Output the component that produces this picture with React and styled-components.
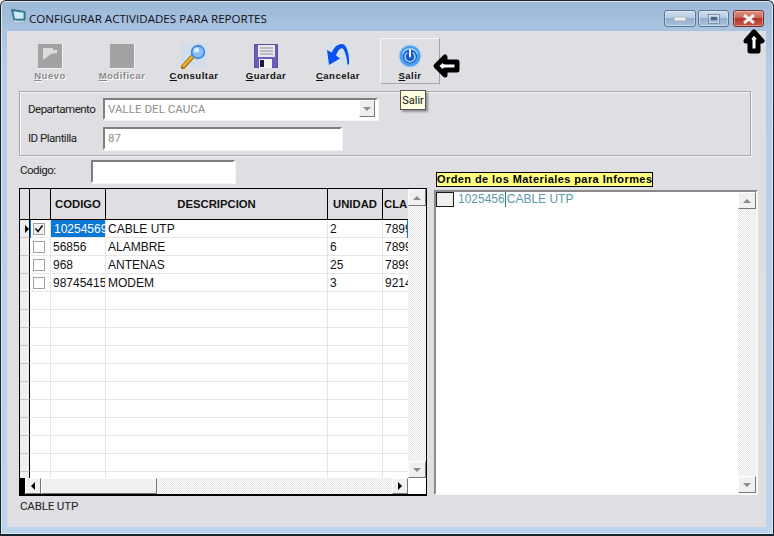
import React from "react";
import styled, { createGlobalStyle } from "styled-components";

const Global = createGlobalStyle`
  html, body { margin: 0; padding: 0; background: #fff; }
  #root { width: 774px; height: 536px; overflow: hidden; }
  * { box-sizing: border-box; }
`;

const sans = `"Liberation Sans", Arial, sans-serif`;
const ui = `Roboto, "Liberation Sans", sans-serif`;

const Win = styled.div`
  position: relative;
  width: 774px; height: 536px;
  display: flex; flex-direction: column;
  border: 1px solid #222;
  border-bottom: 2px solid #16222c;
  border-radius: 6px 6px 0 0;
  background: linear-gradient(180deg, #9db9d8 0, #b5cde8 60px, #bcd4ee 100%);
  padding: 0 7px 7px 6px;
  font-family: ${sans};
  box-shadow: inset 0 0 0 1px #dbe9f6;
  overflow: hidden;
`;
const TitleBar = styled.div`
  height: 30px; flex: none;
  display: flex; align-items: center;
  padding: 0 1px 0 3px;
`;
const TitleText = styled.span`
  margin: 5px 0 0 1px; flex: 1;
  font: 11.6px "Open Sans", sans-serif;
  color: #101018;
`;
const Caps = styled.div`display: flex; align-self: flex-start; margin-top: 9px; margin-right: 1px;`;
const Cap = styled.div`
  width: ${p => p.$w}px; height: 17px;
  margin-left: ${p => p.$gap}px;
  display: flex; align-items: center; justify-content: center;
  border: 1px solid ${p => p.$close ? "#7a2c2a" : "#5d7690"};
  border-radius: 3px;
  background: ${p => p.$close
    ? "linear-gradient(180deg,#dd8f80 0,#c9685a 45%,#b2382c 50%,#c65648 100%)"
    : "linear-gradient(180deg,#cfdeee 0,#b7cce2 45%,#94b0cd 50%,#a9c2dc 100%)"};
  box-shadow: inset 0 0 0 1px rgba(255,255,255,.35);
`;
const Client = styled.div`
  flex: 1; min-height: 0;
  background: #dfdfe3;
  display: flex; flex-direction: column;
  padding: 7px 8px 0 12px;
`;
const Toolbar = styled.div`display: flex; gap: 12px; padding-left: 1px; height: 46px; flex: none;`;
const ToolBtn = styled.div`
  width: 60px; height: 46px; flex: none;
  display: flex; flex-direction: column; align-items: center;
  padding-top: 4px;
  border: 1px solid ${p => p.$hot ? "#a8a8a8" : "transparent"};
  border-top-color: ${p => p.$hot ? "#f6f6f6" : "transparent"};
  border-left-color: ${p => p.$hot ? "#f6f6f6" : "transparent"};
  border-right-color: ${p => p.$hot ? "#a0a0a0" : "transparent"};
`;
const IconBox = styled.div`width: 26px; height: 26px; display: flex; align-items: center; justify-content: center;`;
const ToolLabel = styled.span`
  margin-top: 1px;
  font: bold 9.5px ${sans};
  letter-spacing: 0.5px;
  line-height: 11px;
  white-space: nowrap;
  color: ${p => p.$off ? "#8a8a8a" : "#111"};
  text-shadow: ${p => p.$off ? "1px 1px 0 #fff" : "none"};
  u { text-underline-offset: 1px; }
`;
const Group = styled.div`
  flex: none; width: 732px; height: 65px;
  margin-top: 7px;
  border: 1px solid #a8a8a8;
  box-shadow: inset 1px 1px 0 #f4f4f4, 1px 1px 0 #f4f4f4;
  display: flex; flex-direction: column; gap: 7px;
  padding: 6px 0 0 8px;
`;
const FormRow = styled.div`display: flex; align-items: center; height: 22px;`;
const Label = styled.span`
  width: ${p => p.$w}px; flex: none;
  font: 11.6px ${ui}; letter-spacing: -0.55px; color: #222;
`;
const Sunken = styled.div`
  width: ${p => p.$w}px; height: ${p => p.$h}px;
  border: 2px solid; border-color: #7f7f7f #fff #fff #7f7f7f;
  background: #fff;
  display: flex; align-items: center;
  padding-left: 3px;
  font: 11.6px ${ui}; color: #8f8f8f;
  position: relative;
  box-shadow: 1px 1px 0 #f4f4f4;
`;
const ComboArrow = styled.div`
  position: absolute; right: 1px; top: 0; bottom: 1px; width: 16px;
  background: #efefef;
  border: 1px solid; border-color: #fff #7a7a7a #7a7a7a #fff;
  display: flex; align-items: center; justify-content: center;
`;
const CodigoRow = styled.div`display: flex; align-items: center; margin-top: 4px; height: 23px; flex: none;`;
const CodigoLabel = styled.span`width: 72px; font: 11.6px ${ui}; letter-spacing: -0.55px; color: #222; padding: 0 0 3px 1px;`;
const Panels = styled.div`display: flex; margin-top: 5px; flex: none; align-items: flex-start;`;

const GridBox = styled.div`
  width: 408px; height: 308px; flex: none;
  border: 1px solid #000; border-bottom-width: 2px; border-right-width: 1px;
  background: #fff;
  display: flex; flex-direction: column;
  overflow: hidden;
`;
const GridBody = styled.div`flex: 1; min-height: 0; display: flex;`;
const GridTable = styled.div`flex: 1; min-width: 0; overflow: hidden; display: flex; flex-direction: column;`;
const gridCols = "10px 21px 55px 222px 55px 26px";
const HeadRow = styled.div`
  display: grid; grid-template-columns: ${gridCols};
  height: 31px; flex: none;
  border-bottom: 1px solid #000;
`;
const Head = styled.div`
  background: #dfdfe3;
  border-right: 1px solid #000;
  display: flex; align-items: center; justify-content: ${p => p.$left ? "flex-start" : "center"};
  padding-left: ${p => p.$left ? 1 : 0}px;
  font: bold 11.3px ${sans}; color: #111;
  white-space: nowrap; overflow: hidden;
  &:last-child { border-right: 0; }
`;
const Row = styled.div`
  display: grid; grid-template-columns: ${gridCols};
  height: 18px; flex: none; position: relative;
`;
const Indicator = styled.div`
  background: #efefef;
  border-right: 1px solid #000;
  border-bottom: 1px solid #c8c8c8;
  display: flex; align-items: center; justify-content: flex-end;
`;
const Cell = styled.div`
  border-right: 1px solid #e6e6e6; border-bottom: 1px solid #e6e6e6;
  display: flex; align-items: center;
  padding-left: ${p => p.$sel ? 3 : 2}px;
  font: 12px ${sans}; color: #111;
  white-space: nowrap; overflow: hidden;
  background: ${p => p.$sel ? "#0a78d4" : "#fff"};
  ${p => p.$sel ? "color:#fff;" : ""}
  ${p => p.$center ? "justify-content:center; padding-left:0; padding-right:2px;" : ""}
`;
const SelFrame = styled.div`
  position: absolute; left: 10px; right: 0; top: 0; bottom: -1px;
  border: 1px solid #0a78d4; border-top: 0;
  pointer-events: none;
`;
const Check = styled.div`
  width: 12px; height: 12px;
  border: 1px solid #a0a0a0;
  background: ${p => p.$on ? "#f0f0f0" : "#fff"};
  display: flex; align-items: center; justify-content: center;
`;
const VBar = styled.div`
  width: 18px; flex: none;
  display: flex; flex-direction: column; justify-content: space-between;
  background-image: repeating-conic-gradient(#e6e6e6 0 25%, #fbfbfb 0 50%);
  background-size: 2px 2px;
`;
const HBar = styled.div`
  height: 16px; flex: none; display: flex;
  background: #fff;
`;
const HTrack = styled.div`
  flex: 1; display: flex; justify-content: space-between;
  background-image: repeating-conic-gradient(#e6e6e6 0 25%, #fbfbfb 0 50%);
  background-size: 2px 2px;
`;
const ScrollBtn = styled.div`
  width: ${p => p.$w || 17}px; height: ${p => p.$h || 17}px; flex: none;
  background: #f0f0f0;
  border: 1px solid; border-color: #fff #777 #777 #fff;
  display: flex; align-items: center; justify-content: center;
`;
const Thumb = styled.div`
  width: 116px; height: 16px; flex: none;
  background: #f0f0f0;
  border: 1px solid; border-color: #fff #777 #777 #fff;
`;
const Corner = styled.div`width: 18px; flex: none; background: #fff;`;
const BlackTab = styled.div`width: 5px; flex: none; background: #000;`;

const Right = styled.div`margin-left: 7px; width: 324px; display: flex; flex-direction: column; margin-top: -16px;`;
const Yellow = styled.div`
  margin-left: 2px; width: 217px; height: 15px; flex: none;
  background: #ffff80;
  border: 1px solid #000;
  font: bold 11px ${sans};
  letter-spacing: 0.42px;
  color: #000;
  line-height: 13px;
  white-space: nowrap; overflow: hidden;
`;
const ListBox = styled.div`
  margin-top: 3px;
  width: 324px; height: 305px;
  border: 2px solid; border-color: #8a8a8a #f8f8f8 #f8f8f8 #8a8a8a;
  background: #fff;
  display: flex;
`;
const ListContent = styled.div`flex: 1; display: flex; align-items: flex-start;`;
const ListCheck = styled.div`
  width: 18px; height: 15px; flex: none;
  background: #efefef;
  border: 1px solid #1a1a1a;
`;
const ListText = styled.div`
  margin-left: 4px;
  font: 12px ${sans};
  color: #5a9aa8;
  line-height: 15px;
  display: flex;
`;
const Caret = styled.span`border-right: 1px solid #2a7a80; margin-right: 1px;`;
const Status = styled.div`
  margin-top: 3px; font: 11.6px ${ui}; letter-spacing: -0.2px; color: #222; padding-left: 1px;
`;
const Tooltip = styled.div`
  position: absolute; left: 399px; top: 89px;
  height: 20px; width: 26px;
  background: #ffffe1;
  border: 1px solid #555;
  box-shadow: 2px 2px 2px rgba(0,0,0,.35);
  font: 11px ${ui};
  color: #111;
  display: flex; align-items: center; justify-content: center;
`;
const Overlay = styled.svg`position: absolute; left: ${p => p.$x}px; top: ${p => p.$y}px;`;

const Tri = ({ dir, color = "#8c8c8c", size = 4 }) => {
  const s = size;
  const pts = {
    up: `0,${s} ${s},0 ${s * 2},${s}`,
    down: `0,0 ${s * 2},0 ${s},${s}`,
    left: `${s},0 ${s},${s * 2} 0,${s}`,
    right: `0,0 0,${s * 2} ${s},${s}`,
  }[dir];
  const v = dir === "up" || dir === "down";
  return <svg width={v ? s * 2 : s} height={v ? s : s * 2}><polygon points={pts} fill={color} /></svg>;
};

const IconNuevo = () => (
  <svg width="25" height="25" viewBox="0 0 25 25">
    <rect width="25" height="25" fill="#a2a2a2" />
    <path d="M5 4H15V6H19V9L13 10L5 16Z" fill="#dcdcdc" />
    <path d="M24.5 0v24.5H0" fill="none" stroke="#f4f4f4" />
  </svg>
);
const IconMod = () => (
  <svg width="25" height="25" viewBox="0 0 25 25">
    <rect width="25" height="25" fill="#a2a2a2" />
    <path d="M24.5 0v24.5H0" fill="none" stroke="#f4f4f4" />
  </svg>
);
const IconSearch = () => (
  <svg width="26" height="26" viewBox="0 0 26 26">
    <rect width="26" height="24" fill="#d3dfe8" />
    <path d="M2 24 L12 13" stroke="#a86a10" strokeWidth="4.5" strokeLinecap="round" />
    <path d="M2.5 23 L12 13" stroke="#f4b42a" strokeWidth="2.5" strokeLinecap="round" />
    <circle cx="17" cy="9" r="7.2" fill="#3c86e6" />
    <circle cx="17" cy="9" r="5.6" fill="#86bdf6" />
    <circle cx="15.5" cy="7" r="2.6" fill="#d6ecff" />
  </svg>
);
const IconSave = () => (
  <svg width="24" height="24" viewBox="0 0 24 24">
    <rect width="24" height="24" fill="#5a4ea6" />
    <rect x="1" y="1" width="22" height="22" fill="#6a5eb8" />
    <rect x="4" y="1" width="17" height="12" fill="#e8e8ec" />
    <path d="M6 4h13M6 7h13M6 10h13" stroke="#8d8da0" strokeWidth="1" />
    <rect x="5" y="15" width="13" height="9" fill="#f2f2f2" />
    <rect x="6" y="16" width="4" height="7" fill="#1c1c40" />
  </svg>
);
const IconUndo = () => (
  <svg width="26" height="26" viewBox="0 0 26 26">
    <rect width="25" height="24" fill="#d6e2ea" />
    <path d="M2 7 L4 22 L15 15.5 L11 12.5 C13 7 15.5 4.5 17.5 5.5 C20 7 22 15 22.5 22 L24 21 C24.5 12 22 1 17 1 C12 1 8.5 5 7 9.5 Z" fill="#0a50ee" />
  </svg>
);
const IconPower = () => (
  <svg width="24" height="24" viewBox="0 0 24 24">
    <circle cx="12" cy="12" r="11.5" fill="#b7d6ee" />
    <circle cx="12" cy="12" r="10.5" fill="#4aa0ee" />
    <path d="M4 10 A8.5 8.5 0 0 1 20 10 A16 6 0 0 0 4 10z" fill="#a8d4f8" />
    <circle cx="12" cy="12.5" r="7" fill="#1a58d0" />
    <path d="M8.8 9 A5 5 0 1 0 15.2 9" fill="none" stroke="#9ccdf8" strokeWidth="1.6" strokeLinecap="round" />
    <path d="M12 6v6.5" stroke="#eef7ff" strokeWidth="2" strokeLinecap="round" />
  </svg>
);
const IconApp = () => (
  <svg width="18" height="18" viewBox="0 0 18 18">
    <path d="M1.5 2.5 L15 4.5 L15 13 L4 13 Z" fill="#3f8a9c" stroke="#2f6f85" />
    <path d="M3.5 4.5 L13.5 5.8 L13.5 11.5 L5 11.8 Z" fill="#cfe9f4" />
    <path d="M3 13 L5 16 L14 15.5 L15 14 L7 14 Z" fill="#e8f0f4" stroke="#7c9aaa" strokeWidth=".6" />
  </svg>
);

const tools = [
  { u: "N", rest: "uevo", icon: <IconNuevo />, off: true },
  { u: "M", rest: "odificar", icon: <IconMod />, off: true },
  { u: "C", rest: "onsultar", icon: <IconSearch /> },
  { u: "G", rest: "uardar", icon: <IconSave /> },
  { u: "C", rest: "ancelar", icon: <IconUndo /> },
  { u: "S", rest: "alir", icon: <IconPower />, hot: true },
];
const rows = [
  ["10254569", "CABLE UTP", "2", "7899"],
  ["56856", "ALAMBRE", "6", "7899"],
  ["968", "ANTENAS", "25", "7899"],
  ["98745415", "MODEM", "3", "9214"],
  ...Array.from({ length: 11 }, () => ["", "", "", ""]),
];

export default function App() {
  return (
    <Win>
      <Global />
      <TitleBar>
        <IconApp />
        <TitleText>CONFIGURAR ACTIVIDADES PARA REPORTES</TitleText>
        <Caps>
          <Cap $w={32} $gap={0}><svg width="12" height="4"><rect width="12" height="4" rx="1" fill="#f2f2f2" stroke="#5c6f86" strokeWidth=".6" /></svg></Cap>
          <Cap $w={31} $gap={2}><svg width="12" height="10"><rect x="1" y="1" width="10" height="8" fill="none" stroke="#f2f2f2" strokeWidth="1" /><rect x="0.5" y="0.5" width="11" height="9" fill="none" stroke="#5c6f86" strokeWidth=".7" /><rect x="3" y="3" width="6" height="3" fill="#4f6482" /></svg></Cap>
          <Cap $w={31} $gap={4} $close><svg width="14" height="10" viewBox="0 0 14 10"><path d="M2 1 L12 9 M12 1 L2 9" stroke="#f4efef" strokeWidth="3" /></svg></Cap>
        </Caps>
      </TitleBar>
      <Client>
        <Toolbar>
          {tools.map(t => (
            <ToolBtn key={t.u + t.rest} $hot={t.hot}>
              <IconBox>{t.icon}</IconBox>
              <ToolLabel $off={t.off}><u>{t.u}</u>{t.rest}</ToolLabel>
            </ToolBtn>
          ))}
        </Toolbar>
        <Group>
          <FormRow>
            <Label $w={75}>Departamento</Label>
            <Sunken $w={275} $h={22}>VALLE DEL CAUCA<ComboArrow><Tri dir="down" /></ComboArrow></Sunken>
          </FormRow>
          <FormRow>
            <Label $w={75}>ID Plantilla</Label>
            <Sunken $w={239} $h={23}>87</Sunken>
          </FormRow>
        </Group>
        <CodigoRow>
          <CodigoLabel>Codigo:</CodigoLabel>
          <Sunken $w={144} $h={23} />
        </CodigoRow>
        <Panels>
          <GridBox>
            <GridBody>
              <GridTable>
                <HeadRow>
                  <Head /><Head /><Head>CODIGO</Head><Head>DESCRIPCION</Head><Head>UNIDAD</Head><Head $left>CLA</Head>
                </HeadRow>
                {rows.map((r, i) => (
                  <Row key={i}>
                    <Indicator>{i === 0 && <Tri dir="right" color="#000" size={4} />}</Indicator>
                    <Cell $center>{i < 4 && <Check $on={i === 0}>{i === 0 && <svg width="10" height="10" viewBox="0 0 10 10"><path d="M1.5 4.5 L4 7.5 L8.5 1.5" fill="none" stroke="#111" strokeWidth="1.6" /></svg>}</Check>}</Cell>
                    <Cell $sel={i === 0}>{r[0]}</Cell>
                    <Cell>{r[1]}</Cell>
                    <Cell>{r[2]}</Cell>
                    <Cell>{r[3]}</Cell>
                    {i === 0 && <SelFrame />}
                  </Row>
                ))}
              </GridTable>
              <VBar>
                <ScrollBtn $w={18}><Tri dir="up" /></ScrollBtn>
                <ScrollBtn $w={18}><Tri dir="down" /></ScrollBtn>
              </VBar>
            </GridBody>
            <HBar>
              <BlackTab />
              <ScrollBtn $w={16} $h={16}><Tri dir="left" color="#000" /></ScrollBtn>
              <HTrack>
                <Thumb />
                <ScrollBtn $w={16} $h={16}><Tri dir="right" color="#000" /></ScrollBtn>
              </HTrack>
              <Corner />
            </HBar>
          </GridBox>
          <Right>
            <Yellow>Orden de los Materiales para Informes</Yellow>
            <ListBox>
              <ListContent>
                <ListCheck />
                <ListText><Caret>1025456</Caret>CABLE UTP</ListText>
              </ListContent>
              <VBar>
                <ScrollBtn $w={18}><Tri dir="up" /></ScrollBtn>
                <ScrollBtn $w={18}><Tri dir="down" /></ScrollBtn>
              </VBar>
            </ListBox>
          </Right>
        </Panels>
        <Status>CABLE UTP</Status>
      </Client>
      <Tooltip>Salir</Tooltip>
      <Overlay $x={431} $y={51} width="29" height="28" viewBox="0 0 29 28">
        <path d="M4 14 L13 5 L13 10 L25 10 L25 18 L13 18 L13 23 Z" fill="#fff" stroke="#000" strokeWidth="5" strokeLinejoin="round" />
      </Overlay>
      <Overlay $x={741} $y={27} width="24" height="27" viewBox="0 0 24 27">
        <path d="M12 4 L20 13 L16 13 L16 23 L8 23 L8 13 L4 13 Z" fill="#fff" stroke="#000" strokeWidth="5" strokeLinejoin="round" />
      </Overlay>
    </Win>
  );
}
